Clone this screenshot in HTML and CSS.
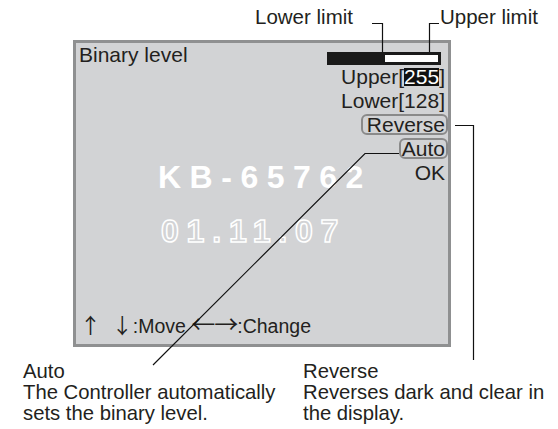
FILE: index.html
```html
<!DOCTYPE html>
<html>
<head>
<meta charset="utf-8">
<link rel="stylesheet" href="styles.css">
</head>
<body>
<div class="page">
  <div class="labels">
    <span class="lbl lbl-lower">Lower limit</span>
    <span class="lbl lbl-upper">Upper limit</span>
  </div>
  <div class="screen">
    <div class="left">
      <div class="title">Binary level</div>
      <div class="logo">
        <div class="model">KB-65762</div>
        <div class="date">01.11.07</div>
      </div>
      <div class="help"><span class="arr-v">↑ ↓</span>:Move <span class="arr-h">←→</span>:Change</div>
    </div>
    <div class="right">
      <div class="bar"><div class="bar-fill" style="width:55px"></div></div>
      <div class="row">Upper[<span class="sel">255</span>]</div>
      <div class="row">Lower[128]</div>
      <div class="row"><span class="btn btn-rev">Reverse</span></div>
      <div class="row"><span class="btn btn-auto">Auto</span></div>
      <div class="row">OK</div>
    </div>
  </div>
  <div class="captions">
    <div class="cap cap-auto">
      <div>Auto</div>
      <div>The Controller automatically</div>
      <div>sets the binary level.</div>
    </div>
    <div class="cap cap-rev">
      <div>Reverse</div>
      <div>Reverses dark and clear in</div>
      <div>the display.</div>
    </div>
  </div>
  <svg class="leaders" width="558" height="429" viewBox="0 0 558 429">
    <polyline points="372,23.5 382.5,23.5 382.5,52" fill="none" stroke="#111" stroke-width="1.2"/>
    <polyline points="439,23.5 429.5,23.5 429.5,52" fill="none" stroke="#111" stroke-width="1.2"/>
    <polyline points="455,125.5 473.5,125.5 473.5,360" fill="none" stroke="#111" stroke-width="1.2"/>
    <polyline points="399,153.5 365,153.5 153,365" fill="none" stroke="#111" stroke-width="1.2"/>
  </svg>
</div>
</body>
</html>
```

FILE: styles.css
```css
html, body {
  margin: 0;
  padding: 0;
  background: #ffffff;
}

.page {
  position: relative;
  width: 558px;
  height: 429px;
  font-family: "Liberation Sans", Arial, sans-serif;
  color: #231f20;
}

.labels {
  box-sizing: border-box;
  height: 40px;
  padding: 5px 0 0 255px;
  display: flex;
  gap: 87px;
  font-size: 20.5px;
  line-height: 24px;
}

.screen {
  box-sizing: border-box;
  margin-left: 73px;
  width: 378px;
  height: 307px;
  border: 3px solid #8f9091;
  background: #d2d3d5;
  display: flex;
  font-size: 21px;
  line-height: 24px;
}

.left {
  flex: 1;
  min-width: 0;
  display: flex;
  flex-direction: column;
  padding-left: 3px;
}

.title {
  white-space: nowrap;
}

.logo {
  margin-top: 94px;
  margin-left: 79px;
  font-weight: bold;
  font-size: 32px;
  line-height: 32px;
  white-space: nowrap;
}

.model {
  color: #ffffff;
  letter-spacing: 8.5px;
}

.date {
  margin-top: 22px;
  margin-left: 3px;
  color: transparent;
  -webkit-text-stroke: 1.5px #ffffff;
  letter-spacing: 7.8px;
}

.help {
  margin-top: auto;
  padding-bottom: 6px;
  padding-left: 1px;
  white-space: nowrap;
  font-size: 19.5px;
}

.arr-v {
  font-family: "Noto Sans CJK JP", sans-serif;
  font-size: 21px;
  word-spacing: 6px;
  line-height: 24px;
}

.arr-h {
  font-family: "Noto Sans CJK JP", sans-serif;
  font-size: 24px;
  line-height: 24px;
  letter-spacing: -1px;
}

.right {
  flex: none;
  display: flex;
  flex-direction: column;
  align-items: flex-end;
  padding: 9px 3px 0 0;
}

.bar {
  box-sizing: border-box;
  width: 114px;
  height: 13px;
  margin-right: 4px;
  border: 3px solid #1a1a1a;
  background: #ffffff;
}

.bar-fill {
  height: 100%;
  background: #1a1a1a;
}

.row {
  white-space: nowrap;
}

.sel {
  display: inline-block;
  line-height: 18px;
  background: #111111;
  color: #ffffff;
}

.btn {
  display: inline-block;
  line-height: 17px;
  border: 2px solid #8a8a8a;
  border-radius: 6px;
  margin-right: -3px;
}

.btn-rev {
  padding: 0 1px 0 4px;
}

.btn-auto {
  padding: 0 1px 0 1px;
}

.captions {
  margin-top: 14px;
  padding-left: 23px;
  display: flex;
  font-size: 20.3px;
  line-height: 21px;
}

.cap {
  white-space: nowrap;
}

.cap-auto {
  width: 280px;
}

.leaders {
  position: absolute;
  left: 0;
  top: 0;
  pointer-events: none;
}
```
